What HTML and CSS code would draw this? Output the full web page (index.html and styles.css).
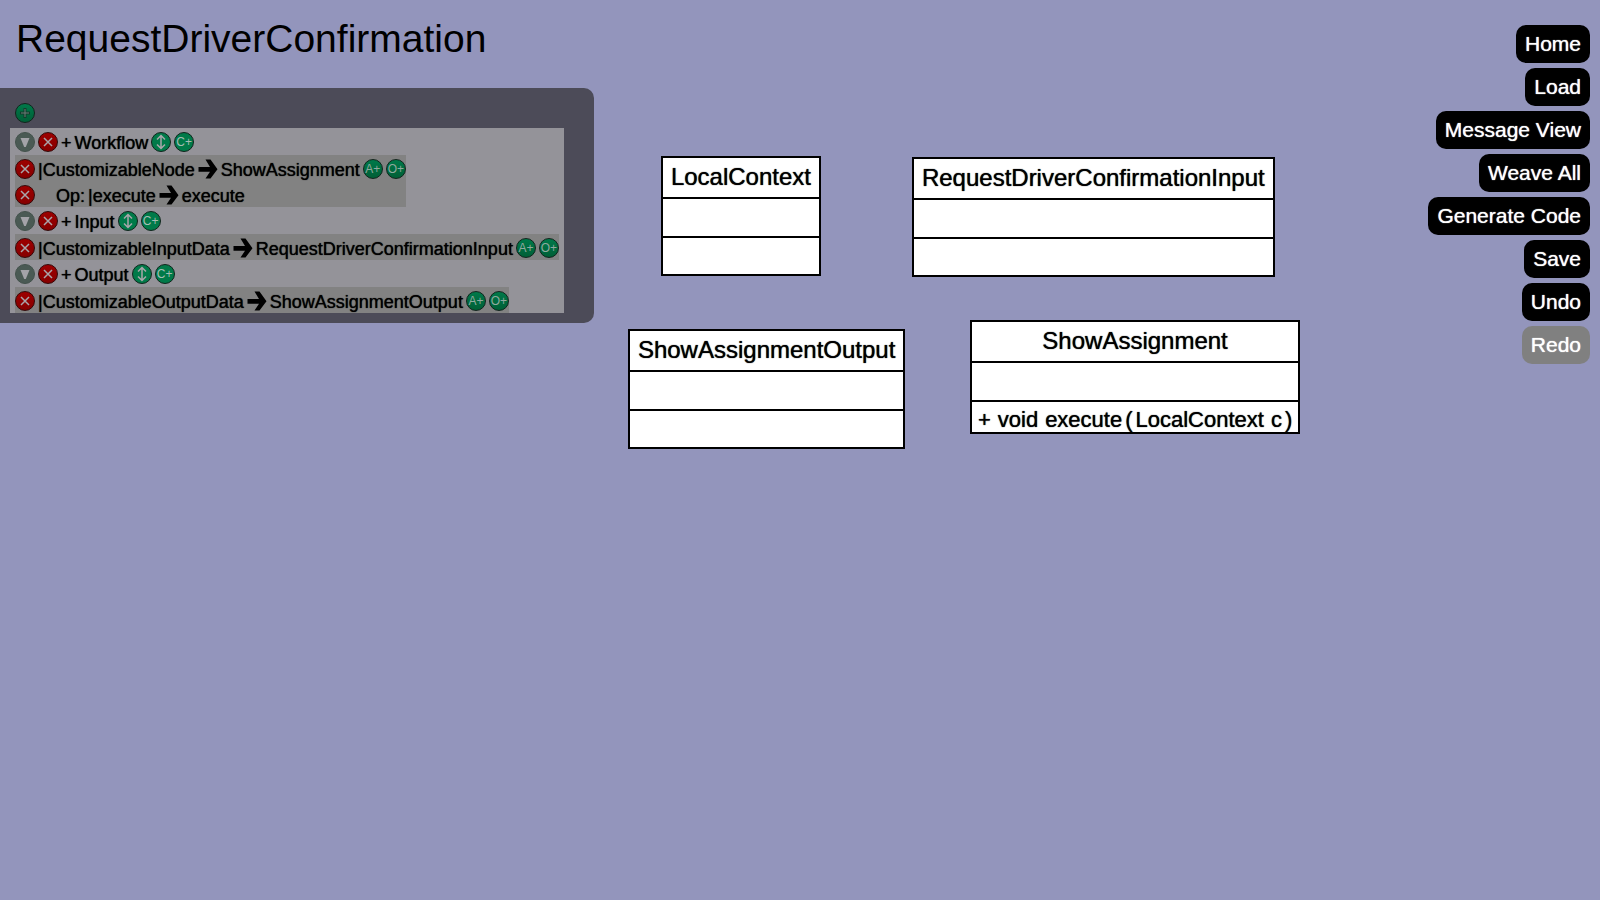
FILE: index.html
```html
<!DOCTYPE html>
<html lang="en">
<head>
<meta charset="utf-8">
<title>RequestDriverConfirmation</title>
<link rel="stylesheet" href="styles.css">
</head>
<body>
<svg class="defs" aria-hidden="true">
  <defs>
    <symbol id="cross" viewBox="0 0 20 20"><path d="M6 6L14 14M14 6L6 14"/></symbol>
    <symbol id="fold" viewBox="0 0 20 20"><path d="M5.5 6H14.500L10.800 15H9.200Z"/></symbol>
    <symbol id="plus" viewBox="0 0 20 20"><path d="M10 5V15M5 10H15"/><path class="shine" d="M10 6V14M6 10H14"/></symbol>
    <symbol id="updown" viewBox="0 0 20 20"><path d="M10 4V16M6 7.500L10 3.500L14 7.500M6 12.500L10 16.500L14 12.500"/></symbol>
    <symbol id="arrow" viewBox="0 0 20 20"><path d="M0.500 8H12L7.500 0.500H12.500L19.500 10.300L12.500 19.500H7.500L12 12.800H0.500Z"/></symbol>
  </defs>
</svg>
<div class="app">
  <div class="side">
    <h1 class="title">RequestDriverConfirmation</h1>
    <section class="panel" aria-label="Concerns">
      <button class="icon add" aria-label="Add group"><svg><use href="#plus"/></svg></button>
      <div class="tree">
        <div class="group">
          <button class="icon fold" aria-label="Collapse Workflow"><svg><use href="#fold"/></svg></button>
          <button class="icon remove" aria-label="Remove Workflow"><svg><use href="#cross"/></svg></button>
          <span>+</span><span>Workflow</span>
          <button class="icon bright" aria-label="Move Workflow"><svg><use href="#updown"/></svg></button>
          <button class="icon bright">C+</button>
        </div>
        <div class="mapping">
          <div class="row">
            <button class="icon remove" aria-label="Remove CustomizableNode"><svg><use href="#cross"/></svg></button>
            <span>|CustomizableNode</span><svg class="arrow"><use href="#arrow"/></svg><span>ShowAssignment</span>
            <button class="icon">A+</button>
            <button class="icon">O+</button>
          </div>
          <div class="row">
            <button class="icon remove" aria-label="Remove execute"><svg><use href="#cross"/></svg></button>
            <span class="operation">Op:</span><span>|execute</span><svg class="arrow"><use href="#arrow"/></svg><span>execute</span>
          </div>
        </div>
        <div class="group">
          <button class="icon fold" aria-label="Collapse Input"><svg><use href="#fold"/></svg></button>
          <button class="icon remove" aria-label="Remove Input"><svg><use href="#cross"/></svg></button>
          <span>+</span><span>Input</span>
          <button class="icon bright" aria-label="Move Input"><svg><use href="#updown"/></svg></button>
          <button class="icon bright">C+</button>
        </div>
        <div class="mapping">
          <div class="row">
            <button class="icon remove" aria-label="Remove CustomizableInputData"><svg><use href="#cross"/></svg></button>
            <span>|CustomizableInputData</span><svg class="arrow"><use href="#arrow"/></svg><span>RequestDriverConfirmationInput</span>
            <button class="icon">A+</button>
            <button class="icon">O+</button>
          </div>
        </div>
        <div class="group">
          <button class="icon fold" aria-label="Collapse Output"><svg><use href="#fold"/></svg></button>
          <button class="icon remove" aria-label="Remove Output"><svg><use href="#cross"/></svg></button>
          <span>+</span><span>Output</span>
          <button class="icon bright" aria-label="Move Output"><svg><use href="#updown"/></svg></button>
          <button class="icon bright">C+</button>
        </div>
        <div class="mapping">
          <div class="row">
            <button class="icon remove" aria-label="Remove CustomizableOutputData"><svg><use href="#cross"/></svg></button>
            <span>|CustomizableOutputData</span><svg class="arrow"><use href="#arrow"/></svg><span>ShowAssignmentOutput</span>
            <button class="icon">A+</button>
            <button class="icon">O+</button>
          </div>
        </div>
      </div>
    </section>
  </div>
  <main class="canvas">
    <article class="node local-context"><h2>LocalContext</h2><div class="part"></div><div class="part"></div></article>
    <article class="node request-input"><h2>RequestDriverConfirmationInput</h2><div class="part"></div><div class="part"></div></article>
    <article class="node assignment-output"><h2>ShowAssignmentOutput</h2><div class="part"></div><div class="part"></div></article>
    <article class="node assignment"><h2>ShowAssignment</h2><div class="part"></div>
      <div class="part method"><span class="word">+</span><span class="word">void</span><span>execute</span><span>(</span><span class="word">LocalContext</span><span>c</span><span>)</span></div>
    </article>
  </main>
  <nav class="menu">
    <button>Home</button>
    <button>Load</button>
    <button>Message View</button>
    <button>Weave All</button>
    <button>Generate Code</button>
    <button>Save</button>
    <button>Undo</button>
    <button disabled>Redo</button>
  </nav>
</div>
</body>
</html>
```
FILE: styles.css
```css
* {
  box-sizing: border-box;
}

body {
  margin: 0;
  background: #9395bc;
  color: #000;
  font-family: "Liberation Sans", Arial, sans-serif;
}

button {
  border: 0;
  font-family: inherit;
  cursor: pointer;
}

.defs {
  position: absolute;
  width: 0;
  height: 0;
}

.app {
  display: flex;
  min-height: 100vh;
}

.title {
  margin: 0;
  padding: 16px 16px 26px;
  font-size: 39px;
  font-weight: 400;
  line-height: 46px;
}

.panel {
  padding: 15px 30px 10px 10px;
  border-radius: 0 10px 10px 0;
  background: #4c4b58;
}

.add {
  margin: 0 5px 5px;
}

.tree {
  padding: 0 5px;
  background: #949399;
  font-size: 18px;
  line-height: 18px;
  white-space: nowrap;
  text-shadow: 0 0 1px #000;
}

.tree span {
  padding-top: 2px;
}

.group,
.row {
  display: flex;
  align-items: center;
  gap: 3px;
  padding: 4px 0 2px;
}

.group {
  padding-bottom: 3px;
}

.mapping {
  width: fit-content;
  background: #828282;
}

.tree .operation {
  padding-left: 18px;
}

.arrow {
  width: 20px;
  height: 20px;
}

.icon {
  display: flex;
  flex: none;
  align-items: center;
  justify-content: center;
  width: 20px;
  height: 20px;
  padding: 0;
  border: 1px solid #10251c;
  border-radius: 50%;
  background: linear-gradient(#00794a, #005f36);
  color: #8fa99f;
  font-size: 12px;
  line-height: 18px;
  text-shadow: none;
}

.icon svg {
  flex: none;
  width: 20px;
  height: 20px;
  fill: none;
  stroke: #a9a6ab;
  stroke-width: 1.5px;
}

.add svg {
  stroke: #123d2c;
  stroke-width: 3px;
}

.shine {
  stroke: #6b7d76;
  stroke-width: 1px;
}

.bright {
  background: #007a49;
  color: #a5bdb4;
}

.remove {
  border-color: #350808;
  background: linear-gradient(#9d0000, #860000);
}

.fold {
  border-color: #43524c;
  background: #4a5a54;
}

.fold svg {
  fill: #a3a3a8;
  stroke: none;
}

.canvas {
  position: relative;
  flex: 1;
}

.node {
  position: absolute;
  border: 2px solid #000;
  background: #fff;
  white-space: nowrap;
  text-shadow: 0 0 1px #000;
}

.node h2 {
  margin: 0;
  padding: 5px 8px 6px;
  font-size: 24px;
  font-weight: 400;
  line-height: 28px;
  text-align: center;
}

.part {
  min-height: 39px;
  border-top: 2px solid #000;
}

.part:last-child {
  min-height: 38px;
}

.local-context {
  left: 67px;
  top: 156px;
}

.request-input {
  left: 318px;
  top: 157px;
}

.assignment-output {
  left: 34px;
  top: 329px;
}

.assignment {
  left: 376px;
  top: 320px;
}

.part.method {
  display: flex;
  gap: 3px;
  min-height: 0;
  padding: 6px 6px 0;
  font-size: 22px;
  line-height: 24px;
}

.word {
  padding-right: 4px;
}

.menu {
  display: flex;
  flex-direction: column;
  align-items: flex-end;
  gap: 5px;
  padding: 25px 10px;
}

.menu button {
  padding: 7px 9px;
  border-radius: 10px;
  background: #000;
  color: #fff;
  font-size: 21px;
  line-height: 24px;
  white-space: nowrap;
  text-shadow: 0 0 1px #fff;
}

.menu button:disabled {
  background: #808080;
  cursor: default;
}
```
